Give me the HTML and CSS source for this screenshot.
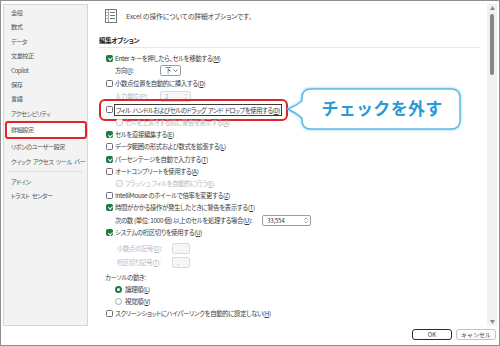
FILE: index.html
```html
<!DOCTYPE html>
<html lang="ja">
<head>
  <meta charset="UTF-8" />
  <title>Excel のオプション</title>
  <link rel="stylesheet" href="styles.css">
</head>
<body>
  <div class="dialog">
    <div class="main-area">
      <nav class="sidebar">
        <div class="nav-item">全般</div>
        <div class="nav-item">数式</div>
        <div class="nav-item">データ</div>
        <div class="nav-item">文章校正</div>
        <div class="nav-item">Copilot</div>
        <div class="nav-item">保存</div>
        <div class="nav-item">言語</div>
        <div class="nav-item">アクセシビリティ</div>
        <div class="nav-item selected">詳細設定</div>
        <div class="nav-item">リボンのユーザー設定</div>
        <div class="nav-item">クイック アクセス ツール バー</div>
        <div class="nav-sep"></div>
        <div class="nav-item">アドイン</div>
        <div class="nav-item">トラスト センター</div>
      </nav>

      <main class="content">
        <div class="intro">
          <svg width="12" height="14" viewBox="0 0 12 14">
            <rect x="0.5" y="0.5" width="11" height="13" fill="#fff" stroke="#777"/>
            <path d="M3.5 1v12" stroke="#aaa"/>
            <path d="M1.5 3.5h1M1.5 6.5h1M1.5 9.5h1M5 3.5h5M5 6.5h5M5 9.5h5" stroke="#777"/>
          </svg>
          <span>Excel の操作についての詳細オプションです。</span>
        </div>

        <div class="section-title">編集オプション</div>

        <div class="rows">
          <div class="row"><span class="cb on"></span>Enter キーを押したら、セルを移動する(<u>M</u>)</div>
          <div class="row tall sub">
            <span class="label w45">方向(<u>I</u>):</span>
            <span class="select">下<svg width="5" height="3" viewBox="0 0 5 3"><path d="M0.5 0.5L2.5 2.5L4.5 0.5" fill="none" stroke="#555" stroke-width="0.8"/></svg></span>
          </div>
          <div class="row"><span class="cb"></span>小数点位置を自動的に挿入する(<u>D</u>)</div>
          <div class="row tall sub off">
            <span class="label w45">入力単位(<u>P</u>):</span>
            <span class="spin w31">2<svg width="4" height="7" viewBox="0 0 4 7"><path d="M0.5 2.5L2 1L3.5 2.5M0.5 4.5L2 6L3.5 4.5" fill="none" stroke="#ccc" stroke-width="0.7"/></svg></span>
          </div>
          <div class="row tall">
            <span class="hl"><span class="cb"></span><span class="focus">フィル ハンドルおよびセルのドラッグ アンド ドロップを使用する(<u>D</u>)</span></span>
          </div>
          <div class="row subcb off"><span class="cb"></span>セルを上書きする前に警告を表示する(<u>A</u>)</div>
          <div class="row"><span class="cb on"></span>セルを直接編集する(<u>E</u>)</div>
          <div class="row"><span class="cb"></span>データ範囲の形式および数式を拡張する(<u>L</u>)</div>
          <div class="row"><span class="cb on"></span>パーセンテージを自動で入力する(<u>T</u>)</div>
          <div class="row"><span class="cb"></span>オートコンプリートを使用する(<u>A</u>)</div>
          <div class="row subcb off"><span class="cb"></span>フラッシュ フィルを自動的に行う(<u>E</u>)</div>
          <div class="row"><span class="cb"></span>IntelliMouse のホイールで倍率を変更する(<u>Z</u>)</div>
          <div class="row"><span class="cb on"></span>時間がかかる操作が発生したときに警告を表示する(<u>T</u>)</div>
          <div class="row tall sub">
            <span class="label w147">次の数 (単位: 1000 個) 以上のセルを処理する場合(<u>U</u>):</span>
            <span class="spin w49">33,554<svg width="4" height="7" viewBox="0 0 4 7"><path d="M0.5 2.5L2 1L3.5 2.5M0.5 4.5L2 6L3.5 4.5" fill="none" stroke="#777" stroke-width="0.7"/></svg></span>
          </div>
          <div class="row"><span class="cb on"></span>システムの桁区切りを使用する(<u>U</u>)</div>
          <div class="row tall sub2 off gap-top">
            <span class="label w55">小数点の記号(<u>D</u>):</span>
            <span class="spin w18">.</span>
          </div>
          <div class="row tall sub2 off">
            <span class="label w55">桁区切り記号(<u>T</u>):</span>
            <span class="spin w18">,</span>
          </div>
          <div class="row plain">カーソルの動き:</div>
          <div class="row radio-row"><span class="radio on"></span>論理順(<u>L</u>)</div>
          <div class="row radio-row"><span class="radio"></span>視覚順(<u>V</u>)</div>
          <div class="row"><span class="cb"></span>スクリーンショットにハイパーリンクを自動的に設定しない(<u>H</u>)</div>
        </div>

        <div class="callout">
          <svg class="callout-shape" width="176" height="44" viewBox="0 0 176 44">
            <path d="M25 2H165Q174 2 174 11V33Q174 42 165 42H25Q16 42 16 33V31Q10 26 2 22Q10 19 16 14V11Q16 2 25 2Z" fill="#fff" stroke="#5fbbe5" stroke-width="1.5"/>
          </svg>
          <span class="callout-text">チェックを外す</span>
        </div>
      </main>

      <div class="scrollbar">
        <svg width="5" height="4" viewBox="0 0 5 4"><path d="M2.5 0L5 4H0Z" fill="#8a8a8a"/></svg>
        <div class="thumb"></div>
        <svg class="down" width="5" height="4" viewBox="0 0 5 4"><path d="M0 0H5L2.5 4Z" fill="#8a8a8a"/></svg>
      </div>
    </div>

    <div class="footer">
      <button class="btn primary">OK</button>
      <button class="btn">キャンセル</button>
    </div>
  </div>
</body>
</html>
```

FILE: styles.css
```css
body {
  margin: 0;
  font-family: "Noto Sans CJK JP", sans-serif;
  font-feature-settings: "palt";
  font-size: 6.4px;
  letter-spacing: -0.35px;
  color: #3c3c3c;
  background: #fff;
}
.dialog {
  width: 500px;
  height: 346px;
  box-sizing: border-box;
  border: 1px solid #8e8e8e;
  display: flex;
  flex-direction: column;
}
.main-area {
  display: flex;
  height: 322px;
  margin-top: 3px;
  padding: 0 2px;
}

/* left menu */
.sidebar {
  width: 85px;
  flex-shrink: 0;
  box-sizing: border-box;
  border: 1px solid #d6d6d6;
  background: #f3f3f3;
  padding-top: 1px;
}
.nav-item {
  height: 14.4px;
  line-height: 14.4px;
  padding-left: 7px;
  font-size: 6.2px;
  letter-spacing: -0.5px;
  word-spacing: 1.5px;
  color: #555;
  white-space: nowrap;
}
.nav-item.selected {
  height: 18px;
  box-sizing: border-box;
  margin: 0 0 1px 1px;
  border: 2px solid #e1232b;
  border-radius: 3px;
  background: #fff;
  padding-left: 4px;
  display: flex;
  align-items: center;
}
.nav-sep {
  height: 1px;
  background: #dcdcdc;
  margin: 2.5px 5px;
}

/* options */
.content {
  flex: 1;
  position: relative;
  padding-left: 11px;
  overflow: hidden;
}
.intro {
  display: flex;
  align-items: center;
  gap: 9px;
  height: 14px;
  margin-top: 5px;
  padding-left: 6px;
  font-size: 6.8px;
  letter-spacing: -0.1px;
  color: #444;
}
.section-title {
  margin: 12px 7px 0 0;
  height: 10px;
  line-height: 10px;
  padding-bottom: 2px;
  border-bottom: 1px solid #e8e8e8;
  font-size: 6.5px;
  letter-spacing: -0.3px;
  font-weight: bold;
  color: #222;
}
.rows {
  margin-top: 4px;
}
.row {
  display: flex;
  align-items: center;
  height: 12.1px;
  padding-left: 7px;
  white-space: nowrap;
}
.row.tall { height: 13.5px; }
.row.sub { padding-left: 16px; }
.row.sub2 { padding-left: 18px; }
.row.subcb { padding-left: 17px; }
.row.plain { padding-left: 6px; margin-top: 2px; }
.row.radio-row { padding-left: 16px; }
.row.gap-top { margin-top: 3px; }
.row.off { color: #b6b6b6; }
u { text-underline-offset: 1px; }

.cb {
  position: relative;
  width: 7px;
  height: 7px;
  box-sizing: border-box;
  border: 1px solid #6b6b6b;
  border-radius: 1.5px;
  background: #fff;
  margin-right: 2px;
  flex-shrink: 0;
}
.cb.on {
  background: #1f7a45;
  border-color: #1f7a45;
}
.cb.on::after {
  content: "";
  position: absolute;
  left: 1.5px;
  top: 0.2px;
  width: 1.5px;
  height: 3.2px;
  border: solid #fff;
  border-width: 0 1px 1px 0;
  transform: rotate(45deg);
}
.off .cb {
  border-color: #cfcfcf;
  background: #f4f4f4;
}
.radio {
  width: 7px;
  height: 7px;
  box-sizing: border-box;
  border: 1px solid #a9a9a9;
  border-radius: 50%;
  margin-right: 3px;
  flex-shrink: 0;
}
.radio.on { border: 2px solid #1f7a45; }

.label { display: inline-block; }
.w45 { width: 45px; }
.w55 { width: 55px; }
.w147 { width: 147px; }
.select, .spin {
  display: inline-flex;
  align-items: center;
  justify-content: space-between;
  height: 11px;
  box-sizing: border-box;
  border: 1px solid #9c9c9c;
  border-radius: 2px;
  padding: 0 2px 0 4px;
  background: #fff;
}
.select { width: 21px; }
.w31 { width: 31px; }
.w49 { width: 49px; }
.w18 { width: 18px; }
.off .spin {
  border-color: #dadada;
  background: #f6f6f6;
}

.hl {
  display: flex;
  align-items: center;
  height: 100%;
  margin-left: -3px;
  padding: 0 3px 0 3px;
  outline: 2px solid #e1232b;
  outline-offset: 2px;
  border-radius: 2px;
}
.focus {
  line-height: 9px;
  padding: 1px 1px 0;
  letter-spacing: -0.5px;
  word-spacing: 1px;
  outline: 1px solid #3a3a3a;
}

/* annotation bubble */
.callout {
  position: absolute;
  left: 198px;
  top: 83px;
  width: 176px;
  height: 44px;
  box-sizing: border-box;
  padding-left: 16px;
  display: flex;
  align-items: center;
  justify-content: center;
}
.callout-shape {
  position: absolute;
  left: 0;
  top: 0;
  filter: drop-shadow(0 0 1.5px rgba(80, 175, 230, 0.7));
}
.callout-text {
  position: relative;
  margin-top: -3px;
  font-size: 17px;
  font-weight: bold;
  letter-spacing: 0.3px;
  font-feature-settings: normal;
  color: #2a9ad6;
}

.scrollbar {
  width: 10px;
  flex-shrink: 0;
  background: #f1f1f1;
  display: flex;
  flex-direction: column;
  align-items: center;
  padding: 2px 0;
  box-sizing: border-box;
}
.thumb {
  width: 4px;
  height: 61px;
  margin-top: 4px;
  border-radius: 2px;
  background: #868686;
}
.scrollbar .down { margin-top: auto; }

.footer {
  display: flex;
  justify-content: flex-end;
  gap: 4px;
  padding: 3px 3px 0 0;
}
.btn {
  width: 40px;
  height: 11px;
  box-sizing: border-box;
  padding: 0;
  border: 1px solid #c2c2c2;
  border-radius: 3px;
  background: #fdfdfd;
  font-family: inherit;
  font-size: 6px;
  letter-spacing: 0;
  color: #444;
  line-height: 1;
}
.btn.primary {
  border: 1.5px solid #2b2b2b;
  background: #fff;
}
```
